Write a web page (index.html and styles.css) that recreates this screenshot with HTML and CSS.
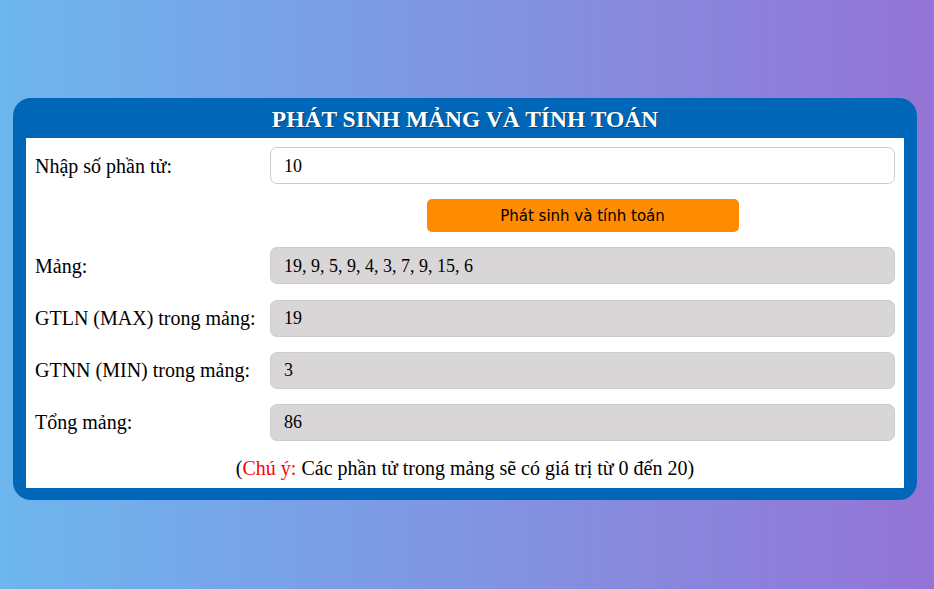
FILE: index.html
```html
<!DOCTYPE html>
<html lang="vi">
<head>
<meta charset="utf-8">
<title>Phát sinh mảng và tính toán</title>
<link rel="stylesheet" href="styles.css">
</head>
<body>
<div class="page">
  <div class="card">
    <h1 class="title">PHÁT SINH MẢNG VÀ TÍNH TOÁN</h1>
    <div class="panel">
      <div class="form">
        <label class="label">Nhập số phần tử:</label>
        <div class="field field-input">10</div>

        <div class="spacer"></div>
        <div class="btn-cell"><button class="btn">Phát sinh và tính toán</button></div>

        <label class="label">Mảng:</label>
        <div class="field field-ro">19, 9, 5, 9, 4, 3, 7, 9, 15, 6</div>

        <label class="label">GTLN (MAX) trong mảng:</label>
        <div class="field field-ro">19</div>

        <label class="label">GTNN (MIN) trong mảng:</label>
        <div class="field field-ro">3</div>

        <label class="label">Tổng mảng:</label>
        <div class="field field-ro">86</div>
      </div>
      <p class="note">(<span class="note-red">Chú ý:</span> Các phần tử trong mảng sẽ có giá trị từ 0 đến 20)</p>
    </div>
  </div>
</div>
</body>
</html>
```

FILE: styles.css
```css
html, body {
  margin: 0;
  padding: 0;
  height: 100%;
}
body {
  background: linear-gradient(to right, #6db6ee, #9474d6);
  font-family: "Liberation Serif", "Times New Roman", serif;
  color: #000;
}
.page {
  padding: 98px 17px 0 13px;
}
.card {
  background: #0067b8;
  border-radius: 18px;
  padding: 0 13px 12px 13px;
}
.title {
  margin: 0;
  height: 40px;
  line-height: 42px;
  text-align: center;
  color: #fff;
  font-size: 23.5px;
  font-weight: bold;
  text-shadow: 1px 1px 1px rgba(0,0,0,0.35);
}
.panel {
  background: #fff;
  padding: 9px 9px 0 9px;
}
.form {
  display: grid;
  grid-template-columns: 235px 1fr;
  row-gap: 15.2px;
  align-items: center;
}
.label {
  font-size: 20px;
  padding-top: 1px;
}
.field {
  box-sizing: border-box;
  height: 37px;
  border: 1px solid #cccccc;
  border-radius: 7px;
  padding: 1px 13px 0;
  font-size: 18px;
  display: flex;
  align-items: center;
}
.field-input {
  background: #fff;
}
.field-ro {
  background: #d8d6d7;
}
.btn-cell {
  display: flex;
  justify-content: center;
}
.btn {
  width: 312px;
  height: 33px;
  background: #ff8c00;
  border: none;
  border-radius: 5px;
  font-family: "DejaVu Sans", "Liberation Sans", sans-serif;
  font-size: 15px;
  color: #000;
  padding: 0;
}
.note {
  margin: 0;
  padding: 14px 0 7px;
  text-align: center;
  font-size: 20px;
  line-height: 26px;
}
.note-red {
  color: #ff0000;
}
```
